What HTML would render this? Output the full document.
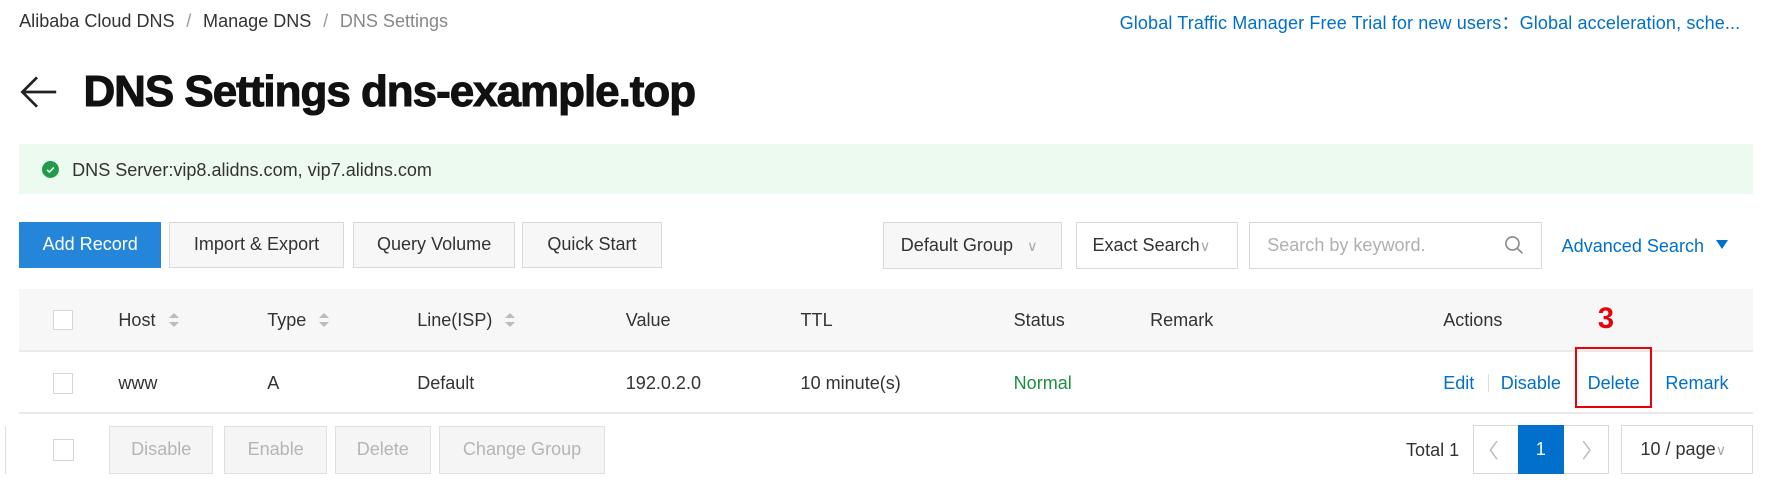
<!DOCTYPE html>
<html><head><meta charset="utf-8"><style>
html,body{margin:0;padding:0;background:#fff;overflow:hidden;width:1768px;height:502px}
#w{position:relative;width:1568px;height:445px;zoom:1.12755;font-family:"Liberation Sans",Arial,sans-serif;font-size:16px;color:#333}
.a{position:absolute;white-space:nowrap}
.btn{position:absolute;box-sizing:border-box;border:1px solid #d9d9d9;background:#f7f7f7;text-align:center;color:#333;font-size:16px}
.dis{background:#f5f5f5;border-color:#e0e0e0;color:#b5b5b5}
.cb{position:absolute;width:18px;height:18px;border:1px solid #d6d6d6;background:#fff;box-sizing:border-box}
.blue{color:#0070cc}
.sort{position:absolute;width:0;height:0;border-left:5px solid transparent;border-right:5px solid transparent}
</style></head><body><div id="w">
<div class="a" style="left:17px;top:10px">Alibaba Cloud DNS <span style="color:#999;margin:0 6px">/</span> Manage DNS <span style="color:#999;margin:0 6px">/</span> <span style="color:#888">DNS Settings</span></div>
<div class="a blue" style="left:993px;top:8px;letter-spacing:0.1px">Global Traffic Manager Free Trial for new users：Global acceleration, sche...</div>
<svg class="a" style="left:17px;top:66px" width="36" height="32" viewBox="0 0 36 32"><path d="M33 16H3M16 3L3 16l13 13" fill="none" stroke="#222" stroke-width="2.4"/></svg>
<div class="a" style="left:74px;top:59px;font-size:39px;font-weight:bold;color:#111;letter-spacing:-0.9px;-webkit-text-stroke:0.9px #111">DNS Settings dns-example.top</div>
<div class="a" style="left:17px;top:128px;width:1538px;height:44px;background:#ecfaf0"></div>
<svg class="a" style="left:37px;top:143px" width="15" height="15" viewBox="0 0 15 15"><circle cx="7.5" cy="7.5" r="7.5" fill="#1e9b4b"/><path d="M4.5 7.8l2 2 4-4" fill="none" stroke="#fff" stroke-width="1.4"/></svg>
<div class="a" style="left:64px;top:142px">DNS Server:vip8.alidns.com, vip7.alidns.com</div>

<div class="btn" style="left:17px;top:197px;width:126px;height:41px;line-height:39px;background:#2585d9;border-color:#2585d9;color:#fff">Add Record</div>
<div class="btn" style="left:150px;top:197px;width:155px;height:41px;line-height:39px">Import &amp; Export</div>
<div class="btn" style="left:313px;top:197px;width:144px;height:41px;line-height:39px">Query Volume</div>
<div class="btn" style="left:463px;top:197px;width:124px;height:41px;line-height:39px">Quick Start</div>
<div class="btn" style="left:783px;top:197px;width:159px;height:42px;line-height:40px;text-align:left;padding-left:15px">Default Group <span style="color:#aaa;margin-left:8px;font-size:13px">∨</span></div>
<div class="btn" style="left:954px;top:197px;width:144px;height:42px;line-height:40px;background:#fff;text-align:left;padding-left:14px">Exact Search<span style="color:#aaa;font-size:13px">∨</span></div>
<div class="btn" style="left:1108px;top:197px;width:260px;height:42px;line-height:40px;background:#fff;text-align:left;padding-left:15px;color:#b0b0b0">Search by keyword.</div>
<svg class="a" style="left:1334px;top:208px" width="18" height="18" viewBox="0 0 18 18"><circle cx="7.5" cy="7.5" r="5.8" fill="none" stroke="#888" stroke-width="1.4"/><path d="M11.8 11.8l4.5 4.5" stroke="#888" stroke-width="1.4"/></svg>
<div class="a blue" style="left:1385px;top:209px">Advanced Search</div>
<div class="a" style="left:1522px;top:213px;border-left:6px solid transparent;border-right:6px solid transparent;border-top:8px solid #0070cc"></div>

<div class="a" style="left:17px;top:256px;width:1538px;height:54px;background:#f7f7f7;border-bottom:2px solid #eaeaea"></div>
<div class="cb" style="left:47px;top:275px"></div>
<div class="a" style="left:105px;top:275px">Host</div>
<div class="sort" style="left:150px;top:278px;border-bottom:5px solid #bbb"></div><div class="sort" style="left:150px;top:286px;border-top:5px solid #bbb"></div>
<div class="a" style="left:237px;top:275px">Type</div>
<div class="sort" style="left:283px;top:278px;border-bottom:5px solid #bbb"></div><div class="sort" style="left:283px;top:286px;border-top:5px solid #bbb"></div>
<div class="a" style="left:370px;top:275px">Line(ISP)</div>
<div class="sort" style="left:448px;top:278px;border-bottom:5px solid #bbb"></div><div class="sort" style="left:448px;top:286px;border-top:5px solid #bbb"></div>
<div class="a" style="left:555px;top:275px">Value</div>
<div class="a" style="left:710px;top:275px">TTL</div>
<div class="a" style="left:899px;top:275px">Status</div>
<div class="a" style="left:1020px;top:275px">Remark</div>
<div class="a" style="left:1280px;top:275px">Actions</div>
<div class="a" style="left:1417px;top:268px;color:#e8000b;font-size:26px;font-weight:bold">3</div>

<div class="cb" style="left:47px;top:331px"></div>
<div class="a" style="left:105px;top:331px">www</div>
<div class="a" style="left:237px;top:331px">A</div>
<div class="a" style="left:370px;top:331px">Default</div>
<div class="a" style="left:555px;top:331px">192.0.2.0</div>
<div class="a" style="left:710px;top:331px">10 minute(s)</div>
<div class="a" style="left:899px;top:331px;color:#1e8e3e">Normal</div>
<div class="a blue" style="left:1280px;top:331px">Edit</div>
<div class="a" style="left:1320px;top:332px;width:1px;height:16px;background:#ddd"></div>
<div class="a blue" style="left:1331px;top:331px">Disable</div>
<div class="a blue" style="left:1408px;top:331px">Delete</div>
<div class="a" style="left:1397px;top:308px;width:68px;height:54px;box-sizing:border-box;border:2px solid #e8000b"></div>
<div class="a blue" style="left:1477px;top:331px">Remark</div>
<div class="a" style="left:17px;top:365px;width:1538px;height:2px;background:#eaeaea"></div>

<div class="a" style="left:0;top:378px;width:4px;height:42px;border-right:1px solid #ddd"></div>
<div class="cb" style="left:47px;top:389px;width:19px;height:20px"></div>
<div class="btn dis" style="left:97px;top:378px;width:92px;height:42px;line-height:40px">Disable</div>
<div class="btn dis" style="left:199px;top:378px;width:91px;height:42px;line-height:40px">Enable</div>
<div class="btn dis" style="left:297px;top:378px;width:85px;height:42px;line-height:40px">Delete</div>
<div class="btn dis" style="left:389px;top:378px;width:148px;height:42px;line-height:40px">Change Group</div>
<div class="a" style="left:1247px;top:390px">Total 1</div>
<div class="btn" style="left:1306px;top:377px;width:121px;height:43px;background:#fff"></div>
<svg class="a" style="left:1320px;top:390px" width="10" height="18" viewBox="0 0 10 18"><path d="M8 1L2 9l6 8" fill="none" stroke="#bbb" stroke-width="1.3"/></svg>
<div class="a" style="left:1346px;top:377px;width:41px;height:43px;background:#0070cc;color:#fff;text-align:center;line-height:43px;font-size:16px">1</div>
<svg class="a" style="left:1402px;top:390px" width="10" height="18" viewBox="0 0 10 18"><path d="M2 1l6 8-6 8" fill="none" stroke="#bbb" stroke-width="1.3"/></svg>
<div class="btn" style="left:1438px;top:377px;width:117px;height:43px;line-height:41px;background:#fff;text-align:left;padding-left:16px">10 / page<span style="color:#aaa;font-size:13px">∨</span></div>
</div></body></html>
